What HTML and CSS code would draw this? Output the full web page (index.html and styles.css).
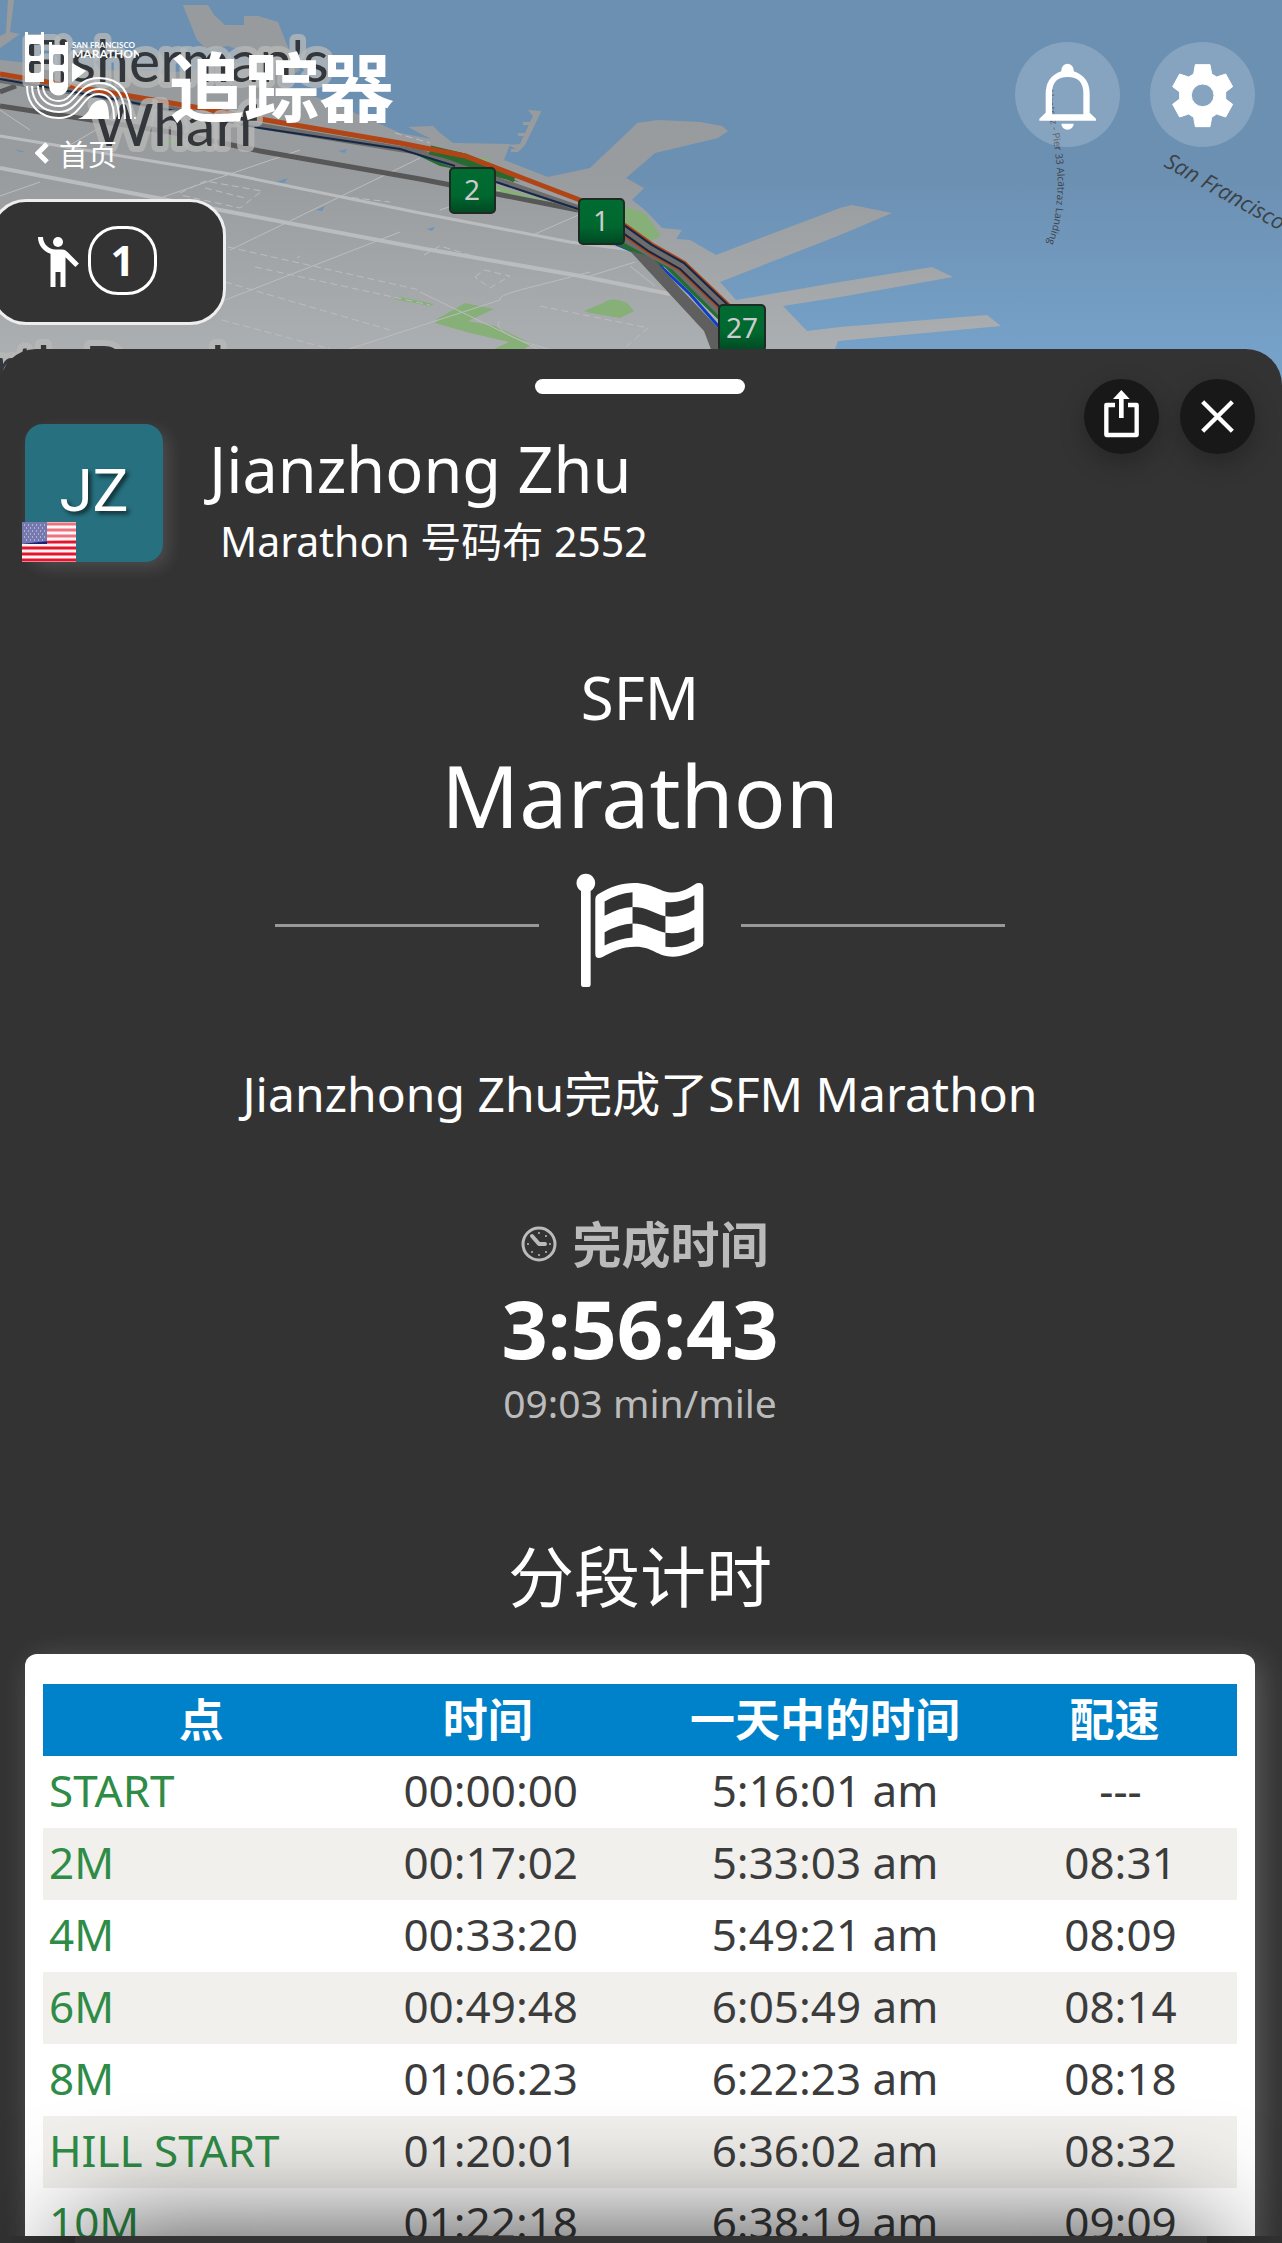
FILE: index.html
```html
<!DOCTYPE html>
<html lang="zh-CN">
<head>
<meta charset="utf-8">
<meta name="viewport" content="width=device-width, initial-scale=1">
<title>追踪器</title>
<link rel="stylesheet" href="styles.css">
</head>
<body>
<div class="app">
  <header class="top">
    <svg class="map" viewBox="0 0 1282 390" preserveAspectRatio="xMinYMin slice" aria-hidden="true">
      <defs>
        <linearGradient id="water" x1="0" y1="0" x2="0" y2="390" gradientUnits="userSpaceOnUse">
          <stop offset="0" stop-color="#6c90b2"/><stop offset=".45" stop-color="#6c90b2"/><stop offset=".9" stop-color="#76a1c8"/>
        </linearGradient>
        <linearGradient id="land" x1="0" y1="0" x2="0" y2="390" gradientUnits="userSpaceOnUse">
          <stop offset="0" stop-color="#989b9d"/><stop offset=".45" stop-color="#999c9e"/><stop offset=".9" stop-color="#acafb2"/>
        </linearGradient>
        <linearGradient id="pin" x1="0" y1="0" x2="0" y2="1">
          <stop offset="0" stop-color="#006c31"/><stop offset=".6" stop-color="#00682f"/><stop offset="1" stop-color="#004823"/>
        </linearGradient>
        <path id="ferryA" d="M208 0C211 40 222 70 219 110C217 140 210 160 190 190"/>
      </defs>
      <rect width="1282" height="390" fill="url(#water)"/>
      <g fill="url(#land)">
        <path d="M0 60L30 63L60 66L100 70L190 72L215 62L262 64L240 50L228 46L208 50L197 40L183 5L208 5L214 15L225 25L244 25L244 16L258 16L278 22L287 45L300 70L278 84L330 102L380 124L400 133L431 139L408 127L433 126L440 133L453 143L510 144L504 160L548 177L590 168L628 132L637 123L658 120L700 122L722 126L728 131L718 138L655 153L626 178L644 188L637 195L632 200L645 210L662 228L682 230L676 239L690 240L716 255L840 208L852 205L892 213L840 235L720 282L736 300L840 282L932 267L953 277L840 297L783 306L807 331L840 327L987 315L1001 326L838 341L835 349V390H0Z"/>
        <path d="M8 0H14L10 32L20 34L0 48V36L6 33Z"/>
        <path d="M508 145L520 144L533 116L528 110L541 111L540 114L525 145L518 152H511V149L516 149Z"/>
        <path d="M523 122H531V125H523ZM518 133H527V136H518Z"/>
      </g>
      <g fill="#86b077">
        <path d="M437 319L465 303L494 309L468 321L495 326L532 344L520 352H488L509 342L470 333L435 323Z"/>
        <path d="M584 311L603 303Q609 298 619 300L627 303L634 311L620 318L590 313Z"/>
        <path d="M400 297L434 304L430 306L394 299ZM625 206L646 214L661 236L650 241L624 226ZM490 184L560 205L496 194Z"/>
        <path d="M468 158L490 158L488 162L470 162ZM160 140L184 139L182 143L160 143Z"/>
      </g>
      <g fill="#6c94bb">
        <path d="M14 149L26 152L20 152ZM338 151L347 149L345 153ZM276 182L288 178L284 183ZM316 210L325 206L322 211ZM427 229L435 227L432 231Z"/>
      </g>
      <g fill="none" stroke="#bbbcbd">
        <g stroke-width="4"><path d="M0 168L220 210L420 248L580 276L670 294"/></g>
        <g stroke-width="3"><path d="M0 136L230 174L420 213L570 242L640 251"/></g>
        <g stroke-width="1">
          <path d="M0 110L30 130M70 145L130 110M0 196L40 182M160 198L300 150M230 250L420 158M220 302L400 232M300 256L297 258M440 210L500 190M535 234L590 210M340 352L500 300Q497 296 520 290L590 272M500 321C492 328 510 340 560 352M420 292L540 350"/>
          <path stroke-dasharray="7 4" d="M180 193L205 181L262 191L240 208L180 195M205 188L245 198M228 247L420 290M255 267L430 305M225 282L390 330M222 320L330 349M330 195L390 202M395 133L430 143M540 306L648 328L620 352M424 255L440 246L480 258M475 277L484 270L510 276L490 288Z"/>
          <path d="M630 266L655 286M590 276L635 262"/>
        </g>
      </g>
      <g fill="none">
        <path d="M0 92L16 86M0 106L170 132L260 151L420 179L578 210" stroke="#575757" stroke-width="5"/>
        <path d="M400 147L465 161L520 182L510 180L440 166Z" fill="#256c33"/>
        <path d="M0 80L130 101L260 126L400 149L420 152L460 167L578 208" stroke="#6c6c6c" stroke-width="6"/>
        <path d="M0 79L130 102L260 128L400 149L455 166M496 182L578 209" stroke="#142748" stroke-width="2"/>
        <path d="M430 150L465 158L515 178" stroke="#28692f" stroke-width="9"/>
        <path d="M0 74L130 96L200 108L260 119L400 143L465 156L525 179L580 200" stroke="#b14516" stroke-width="5"/>
        <path d="M620 238L655 255L690 290L722 330" stroke="#aeb1b5" stroke-width="9"/>
        <path d="M616 244L654 260L690 294L720 328" stroke="#0e3fc7" stroke-width="3"/>
        <path d="M620 240L668 262L722 315" stroke="#256c33" stroke-width="12"/>
        <path d="M630 251L652 257L680 288L722 332L726 352H712L704 331Z" fill="#5f5f5f"/>
        <path d="M622 236L676 266L724 314" stroke="#6c6c6c" stroke-width="10"/>
        <path d="M622 228L650 248L682 266L726 308" stroke="#b14516" stroke-width="12"/>
        <path d="M622 228L650 248L682 266L726 308" stroke="#142748" stroke-width="9"/>
        <path d="M622 228L650 248L682 266L726 308" stroke="#6c6c6c" stroke-width="5"/>
      </g>
      <g class="place">
        <text x="176" y="82" text-anchor="middle">Fisherman's</text>
        <text x="175" y="146" text-anchor="middle">Wharf</text>
        <text x="244" y="388" text-anchor="end">North Beach</text>
      </g>
      <g class="ferry">
        <text class="ferry-small" transform="translate(838 88)"><textPath href="#ferryA">Alcatraz - Pier 33 Alcatraz Landing</textPath></text>
        <text class="ferry-large" transform="translate(1163 166) rotate(29)">San Francisco</text>
      </g>
      <g class="pin">
        <rect x="450" y="168" width="45" height="45" rx="4"/><text x="472" y="200">2</text>
        <rect x="579" y="199" width="45" height="45" rx="4"/><text x="601" y="231">1</text>
        <rect x="719" y="305" width="46" height="46" rx="4"/><text x="742" y="338">27</text>
      </g>
    </svg>

    <div class="bar">
      <div class="brand">
        <div class="brand-row">
          <svg class="logo" viewBox="0 0 114 90" role="img" aria-label="San Francisco Marathon">
            <g fill="#fff">
              <path fill-rule="evenodd" d="M0 0H3V3H16V0H19V50H0ZM6 12Q4 12 4 15V21Q4 24 7 24H13Q16 24 16 21V15Q16 12 13 12ZM6 29Q4 30 4 33V37Q4 41 7 41H13Q16 41 16 37V33Q16 29 13 29Z"/>
              <path fill-rule="evenodd" d="M24 10H27V13H40V10H43V54A9 9 0 0 1 24 54ZM30 22Q28 22 28 25V30Q28 33 31 33H36Q39 33 39 30V25Q39 22 36 22ZM31 39Q28 39 28 42V47Q28 51 31 51H36Q39 51 39 47V42Q39 39 36 39Z"/>
              <path d="M47 31L61 39L47 50ZM53 87Q62 84 66 74Q71 67 78 68Q84 70 84 87Z"/>
              <text class="logo-small" x="47" y="16">SAN FRANCISCO</text>
              <text class="logo-big" x="47" y="26">MARATHON</text>
            </g>
            <g fill="none" stroke="#fff" stroke-width="2">
              <path d="M2 54C2 74 16 86 34 86C58 86 56 62 74 62C85 62 89 72 89 87"/>
              <path d="M7 54C7 70 18 80 34 80C54 80 54 57 74 57C88 57 94 68 94 87"/>
              <path d="M13 54C13 66 22 74 34 74C51 74 52 51 74 51C92 51 100 64 100 87"/>
              <path d="M18 54C18 63 25 69 34 69C49 69 49 46 74 46C96 46 106 60 106 87"/>
            </g>
            <circle cx="110" cy="86" r="1" fill="#fff"/>
          </svg>
          <h1>追踪器</h1>
        </div>
        <a class="home" href="#home">
          <svg viewBox="0 0 14 22"><path d="M12 2L3 11L12 20" fill="none" stroke="#fff" stroke-width="5"/></svg>
          首页
        </a>
      </div>
      <div class="tools">
        <button class="tool" aria-label="通知">
          <svg viewBox="525 126 315 315"><path fill="#fff" fill-rule="evenodd" d="M664 214V210A18 18 0 0 1 701 210V214Q749 230 749 282V338L768 356V362H598V356L617 338V282Q617 230 664 214ZM636 343H730V280Q730 231 683 231Q636 231 636 280ZM664 371H701A18 18 0 0 1 664 371Z"/></svg>
        </button>
        <button class="tool" aria-label="设置">
          <svg viewBox="930 126 315 315"><path fill="#fff" stroke="#fff" stroke-width="3" stroke-linejoin="round" fill-rule="evenodd" d="M1066 194H1110L1115 222L1130 231L1157 222L1178 260L1157 276V297L1178 313L1157 351L1130 342L1115 352L1110 380H1066L1061 352L1046 342L1019 351L998 313L1019 297V276L998 260L1019 222L1046 231L1061 222ZM1088 252A34 34 0 1 0 1088 320A34 34 0 1 0 1088 252Z"/></svg>
        </button>
      </div>
    </div>

    <button class="tracked" aria-label="已追踪 1">
      <svg viewBox="0 0 24 24"><circle cx="12" cy="4" r="2" fill="#fff"/><path fill="#fff" d="M15.89 8.11C15.5 7.72 14.83 7 13.53 7H10.99C8.24 6.99 6 4.75 6 2H4c0 3.16 2.11 5.84 5 6.71V22h2v-6h2v6h2V10.05L18.95 14l1.41-1.41z"/></svg>
      <span class="count">1</span>
    </button>
  </header>

  <main class="sheet">
    <div class="handle"></div>
    <div class="sheet-tools">
      <button class="round" aria-label="分享">
        <svg viewBox="132 117 225 225"><path fill="none" stroke="#fff" stroke-width="13" stroke-linejoin="round" d="M225 195H199V285H290V195H264"/><path fill="#fff" d="M244 150L269 177H251V234H237V177H219Z"/></svg>
      </button>
      <button class="round" aria-label="关闭">
        <svg viewBox="420 117 225 225"><path fill="none" stroke="#fff" stroke-width="13" d="M488 185L577 274M577 185L488 274"/></svg>
      </button>
    </div>

    <section class="runner">
      <div class="avatar">JZ
        <svg class="flag" viewBox="0 0 54 40" role="img" aria-label="USA">
          <rect width="54" height="40" fill="#f4f4f4"/>
          <path stroke="#e5132c" stroke-width="3" d="M0 2H54M0 8H54M0 14H54M0 20H54M0 26H54M0 32H54M0 38H54"/>
          <rect width="25" height="22" fill="#1c1f7c"/>
          <path stroke="#d5d6ea" stroke-width="1" stroke-dasharray="1 3" d="M2 3H24M4 6H24M2 9H24M4 12H24M2 15H24M4 18H24"/>
          <path fill="#fff" opacity=".4" d="M0 0H54V18Q30 18 0 22Z"/>
        </svg>
      </div>
      <div class="who">
        <h2>Jianzhong Zhu</h2>
        <p>Marathon 号码布 2552</p>
      </div>
    </section>

    <section class="result">
      <p class="event">SFM</p>
      <p class="race">Marathon</p>
      <div class="divider">
        <svg viewBox="476 698 383 343"><g fill="#fff"><path d="M490 752A28 28 0 1 1 519 752V1034Q519 1041 512 1041H497Q490 1041 490 1034Z"/><path fill-rule="evenodd" d="M533 776Q533 768 540 763C580 738 612 728 650 728C705 728 730 757 766 757C795 757 815 743 838 729Q858 724 858 742V910Q858 917 852 921C825 938 795 950 766 950C720 950 705 920 655 920C610 920 585 935 555 951Q533 960 533 940ZM561 784V827Q605 802 645 800V756Q600 760 561 784ZM645 800V850C685 850 705 868 744 878V828C710 820 690 800 645 800ZM744 785V828Q790 835 831 808V765Q790 790 744 785ZM561 876V916Q600 897 645 892V850Q605 852 561 876ZM744 878V920Q790 926 831 902V861Q790 884 744 878Z"/></g></svg>
      </div>
      <p class="message">Jianzhong Zhu完成了SFM Marathon</p>
      <h3 class="finish-label">
        <svg viewBox="0 0 36 36"><circle cx="18" cy="18" r="16" fill="none" stroke="#bbb" stroke-width="3"/><path d="M11 10L18 18H24" fill="none" stroke="#bbb" stroke-width="4" stroke-linecap="round" stroke-linejoin="round"/><g fill="#bbb"><circle cx="18" cy="7" r="1"/><circle cx="25" cy="10" r="1"/><circle cx="29" cy="18" r="1"/><circle cx="25" cy="26" r="1"/><circle cx="18" cy="29" r="1"/><circle cx="11" cy="26" r="1"/><circle cx="7" cy="18" r="1"/></g></svg>
        完成时间
      </h3>
      <p class="finish-time">3:56:43</p>
      <p class="pace">09:03 min/mile</p>
    </section>

    <h3 class="splits-title">分段计时</h3>
    <section class="card">
      <table>
        <thead><tr><th>点</th><th>时间</th><th>一天中的时间</th><th>配速</th></tr></thead>
        <tbody>
          <tr><td>START</td><td>00:00:00</td><td>5:16:01 am</td><td>---</td></tr>
          <tr><td>2M</td><td>00:17:02</td><td>5:33:03 am</td><td>08:31</td></tr>
          <tr><td>4M</td><td>00:33:20</td><td>5:49:21 am</td><td>08:09</td></tr>
          <tr><td>6M</td><td>00:49:48</td><td>6:05:49 am</td><td>08:14</td></tr>
          <tr><td>8M</td><td>01:06:23</td><td>6:22:23 am</td><td>08:18</td></tr>
          <tr><td>HILL START</td><td>01:20:01</td><td>6:36:02 am</td><td>08:32</td></tr>
          <tr><td>10M</td><td>01:22:18</td><td>6:38:19 am</td><td>09:09</td></tr>
        </tbody>
      </table>
    </section>
  </main>
  <footer class="foot"></footer>
</div>
</body>
</html>
```

FILE: styles.css
```css
* { box-sizing: border-box; margin: 0; padding: 0; }

body {
  background: #333;
  color: #fff;
  font-family: "Noto Sans", "Noto Sans CJK SC", sans-serif;
}

button { border: 0; color: inherit; font: inherit; cursor: pointer; }
svg { display: block; }

.app {
  position: relative;
  display: flex;
  flex-direction: column;
  height: 100vh;
  overflow: hidden;
}

/* Map and top bar */
.top { position: relative; flex: none; padding-bottom: 24px; }
.map { position: absolute; top: 0; left: 0; width: 100%; height: 390px; }

.place text {
  font: 59px Lato, sans-serif;
  fill: #33363a;
  stroke: rgba(184, 186, 184, .75);
  stroke-width: 12px;
  stroke-linejoin: round;
  paint-order: stroke;
}
.ferry { fill: #3c4247; font-family: "Open Sans", sans-serif; }
.ferry-small { font-size: 10px; }
.ferry-large { font-size: 22px; font-style: italic; }
.pin rect { fill: url(#pin); stroke: #1d2b22; stroke-width: 2px; }
.pin text { font-size: 28px; fill: #ccc; text-anchor: middle; }

.bar {
  position: relative;
  display: flex;
  justify-content: space-between;
  padding: 32px 27px 0 25px;
}
.brand-row { display: flex; align-items: flex-start; gap: 30px; height: 95px; }
.logo { width: 114px; height: 90px; }
.logo-small { font: bold 8px Lato, sans-serif; }
.logo-big { font: bold 12px Lato, sans-serif; }
h1 { font-size: 75px; line-height: 110px; font-weight: 700; }
.home {
  display: flex;
  align-items: center;
  gap: 10px;
  width: max-content;
  height: 51px;
  padding-left: 10px;
  color: #fff;
  font-size: 29px;
  text-decoration: none;
}
.home svg { width: 14px; height: 22px; }
.tools { display: flex; gap: 30px; padding-top: 10px; }
.tool {
  width: 105px;
  height: 105px;
  border-radius: 50%;
  background: rgba(255, 255, 255, .18);
}

.tracked {
  position: relative;
  display: flex;
  align-items: center;
  width: 236px;
  height: 126px;
  margin: 21px 0 0 -10px;
  padding-left: 35px;
  border: 3px solid #eee;
  border-radius: 36px;
  background: #333;
}
.tracked svg { width: 60px; height: 60px; }
.count {
  width: 69px;
  height: 69px;
  margin-bottom: 3px;
  border: 3px solid #fff;
  border-radius: 30px;
  font-size: 42px;
  line-height: 61px;
  font-weight: 700;
}

/* Runner sheet */
.sheet {
  position: relative;
  flex: 1;
  min-height: 0;
  overflow: hidden;
  padding: 30px 27px 0 25px;
  border-radius: 36px 36px 0 0;
  background: #333;
}
.handle { width: 210px; height: 15px; margin: 0 auto; border-radius: 8px; background: #fff; }
.sheet-tools { position: absolute; top: 30px; right: 27px; display: flex; gap: 21px; }
.round {
  width: 75px;
  height: 75px;
  border-radius: 50%;
  background: #181818;
  box-shadow: 0 9px 24px rgba(0, 0, 0, .25);
}

.runner { display: flex; gap: 46px; margin-top: 30px; }
.avatar {
  position: relative;
  width: 138px;
  height: 138px;
  border-radius: 18px;
  background: #27707f;
  box-shadow: 6px 6px 16px rgba(255, 255, 255, .12);
  font-family: Roboto, sans-serif;
  font-size: 60px;
  line-height: 134px;
  text-align: center;
  text-shadow: 3px 3px 4px rgba(0, 0, 0, .6);
}
.flag { position: absolute; left: -3px; bottom: 0; width: 54px; height: 40px; }
.who h2 { font-size: 63px; line-height: 90px; font-weight: 400; }
.who p { padding-left: 11px; font-size: 41px; line-height: 54px; }

.result { text-align: center; }
.event { margin-top: 85px; font-size: 60px; line-height: 88px; }
.race { font-size: 86px; line-height: 108px; }
.divider {
  display: flex;
  align-items: center;
  justify-content: center;
  gap: 37px;
  margin-top: 24px;
}
.divider::before, .divider::after {
  content: "";
  width: 264px;
  height: 3px;
  margin-bottom: 10px;
  background: #999;
}
.divider svg { width: 128px; height: 114px; }
.message { margin-top: 71px; font-size: 48px; line-height: 72px; }
.finish-label {
  display: flex;
  align-items: center;
  justify-content: center;
  gap: 15px;
  margin-top: 78px;
  padding-left: 10px;
  color: #bbb;
  font-size: 49px;
  line-height: 72px;
}
.finish-label svg { width: 36px; height: 36px; }
.finish-time { font-size: 81px; line-height: 96px; font-weight: 700; }
.pace { color: #bbb; font-size: 39px; line-height: 54px; }

/* Splits */
.splits-title { margin-top: 98px; font-size: 66px; line-height: 96px; font-weight: 400; text-align: center; }
.card {
  margin-top: 30px;
  padding: 30px 18px;
  border-radius: 12px;
  background: #fff;
  box-shadow: 6px 6px 30px rgba(255, 255, 255, .2);
}
table { width: 100%; border-collapse: collapse; table-layout: fixed; }
tr { height: 72px; }
th { padding-right: 6px; background: #0082ca; color: #fff; font-size: 45px; line-height: 60px; }
td { padding-bottom: 4px; color: #3c3c3c; font-size: 44px; line-height: 60px; text-align: center; }
td:first-child { padding-left: 6px; color: #2f8c46; text-align: left; }
th:nth-child(1) { width: 27%; }
th:nth-child(2) { width: 21%; }
th:nth-child(3) { width: 35%; padding-right: 0; }
th:last-child { padding-right: 42px; }
td:last-child { padding-right: 30px; }
tbody tr:nth-child(even) { background: #f1f0ec; }

/* Shade cast over the scrolling content */
.foot { position: relative; flex: none; height: 7px; background: #333; }
.foot::before {
  content: "";
  position: absolute;
  top: 0;
  left: 75px;
  right: 75px;
  height: 300px;
  box-shadow: 0 0 120px rgba(0, 0, 0, .8);
}
```
